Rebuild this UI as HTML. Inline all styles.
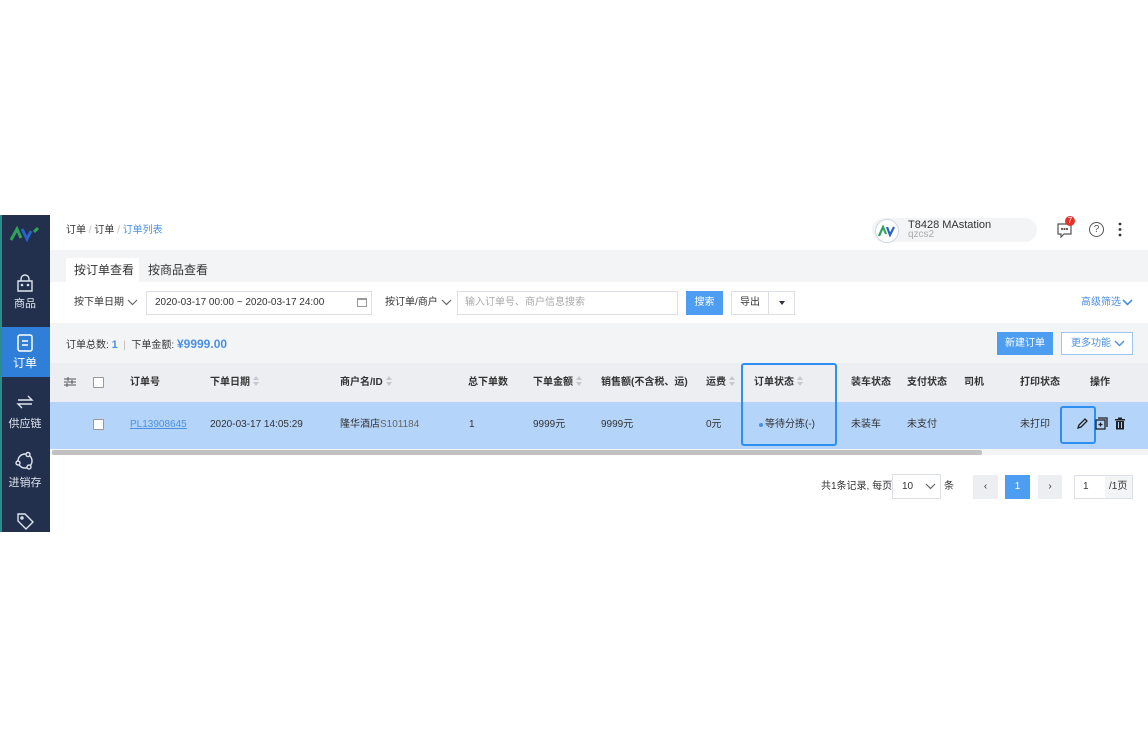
<!DOCTYPE html>
<html><head><meta charset="utf-8"><style>
*{margin:0;padding:0;box-sizing:border-box}
body{width:1148px;height:748px;background:#fff;position:relative;font-family:"Liberation Sans","Noto Sans CJK SC",sans-serif;font-size:10px;color:#333;overflow:hidden}
.a{position:absolute;white-space:nowrap;line-height:12px}
.side{left:0;top:215px;width:50px;height:317px;background:#22304d;border-left:2px solid #2a8d8a}
.ni{left:0;width:50px;text-align:center;color:#dfe4ee;font-size:11px;line-height:14px}
.b{font-weight:bold;color:#333}
.sort{display:inline-block;width:6px;height:0;margin-left:3px;position:relative;top:-9px}
.sort:before{content:"";position:absolute;left:0;top:0;border:3px solid transparent;border-bottom:4px solid #c8c8cc;border-top:0}
.sort:after{content:"";position:absolute;left:0;top:6px;border:3px solid transparent;border-top:4px solid #c8c8cc;border-bottom:0}
.cb{width:11px;height:11px;border:1px solid #999;background:#fff;border-radius:1px}
</style></head><body>
<div class="a side"></div>
<svg class="a" style="left:9px;top:226px" width="32" height="16" viewBox="0 0 32 16"><path d="M2 14 L8 3 L12 12" stroke="#2fa35a" stroke-width="3" fill="none"/><path d="M13 3 L18 13 L22 5" stroke="#2a62c8" stroke-width="3" fill="none"/><path d="M25 6 L29 2" stroke="#2fa35a" stroke-width="3"/></svg>
<svg class="a" style="left:15px;top:274px" width="20" height="20" viewBox="0 0 20 20" fill="none" stroke="#dfe4ee" stroke-width="1.4"><path d="M3 7h14v10H3z"/><path d="M6 7V5a4 4 0 0 1 8 0v2"/><circle cx="7" cy="11" r=".6"/><circle cx="13" cy="11" r=".6"/></svg>
<div class="a ni" style="top:297px">商品</div>
<div class="a" style="left:2px;top:327px;width:48px;height:50px;background:#2f7fd8"></div>
<div class="a" style="left:45px;top:347px;border:5px solid transparent;border-right:5px solid #f3f4f6"></div>
<svg class="a" style="left:15px;top:333px" width="20" height="20" viewBox="0 0 20 20" fill="none" stroke="#fff" stroke-width="1.5"><rect x="3" y="2" width="14" height="16" rx="2"/><path d="M7 8h6M7 12h6"/></svg>
<div class="a ni" style="top:356px;color:#fff;font-size:12px">订单</div>
<svg class="a" style="left:14px;top:392px" width="22" height="20" viewBox="0 0 22 20" fill="none" stroke="#dfe4ee" stroke-width="1.4"><path d="M4 8h14l-4-4M18 12H4l4 4"/></svg>
<div class="a ni" style="top:417px">供应链</div>
<svg class="a" style="left:15px;top:451px" width="20" height="20" viewBox="0 0 20 20" fill="none" stroke="#dfe4ee" stroke-width="1.4"><circle cx="10" cy="10" r="7"/><circle cx="13" cy="3.5" r="2" fill="#22304d"/><circle cx="3" cy="12" r="2" fill="#22304d"/><circle cx="14" cy="16" r="2" fill="#22304d"/></svg>
<div class="a ni" style="top:476px">进销存</div>
<svg class="a" style="left:15px;top:511px" width="20" height="20" viewBox="0 0 20 20" fill="none" stroke="#dfe4ee" stroke-width="1.4"><path d="M3 3h7l8 8-7 7-8-8z"/><circle cx="7" cy="7" r="1"/></svg>

<div class="a" style="left:50px;top:250px;width:1098px;height:282px;background:#f3f4f6"></div>
<div class="a" style="left:66px;top:225px">订单 <span style="color:#bbb">/</span> 订单 <span style="color:#bbb">/</span> <span style="color:#4a90e2">订单列表</span></div>
<div class="a" style="left:872px;top:218px;width:165px;height:24px;background:#f3f4f6;border-radius:12px"></div>
<div class="a" style="left:875px;top:219px;width:24px;height:24px;border-radius:50%;background:#fff;border:1px solid #cfd6e0"></div>
<svg class="a" style="left:878px;top:225px" width="18" height="12" viewBox="0 0 18 12"><path d="M1 11L5 2 8 9" stroke="#2fa35a" stroke-width="2.2" fill="none"/><path d="M9 2l3 8 4-8" stroke="#2a62c8" stroke-width="2.2" fill="none"/></svg>
<div class="a" style="left:908px;top:219px;font-size:11px">T8428 MAstation</div>
<div class="a" style="left:908px;top:229px;color:#aaa">qzcs2</div>
<svg class="a" style="left:1056px;top:221px" width="18" height="18" viewBox="0 0 18 18" fill="none" stroke="#555" stroke-width="1.2"><path d="M2 3h13v10H8l-3 3v-3H2z"/><circle cx="6" cy="8" r=".5"/><circle cx="8.5" cy="8" r=".5"/><circle cx="11" cy="8" r=".5"/></svg>
<div class="a" style="left:1065px;top:216px;width:10px;height:10px;border-radius:50%;background:#e5312a;color:#fff;font-size:8px;text-align:center;line-height:10px">7</div>
<div class="a" style="left:1089px;top:222px;width:15px;height:15px;border:1.3px solid #555;border-radius:50%;font-size:10px;text-align:center;line-height:13px;color:#555">?</div>
<svg class="a" style="left:1117px;top:222px" width="6" height="15"><circle cx="3" cy="2" r="1.4" fill="#333"/><circle cx="3" cy="7.5" r="1.4" fill="#333"/><circle cx="3" cy="13" r="1.4" fill="#333"/></svg>

<div class="a" style="left:66px;top:258px;width:73px;height:25px;background:#fff"></div>
<div class="a" style="left:74px;top:263px;font-size:12px;line-height:14px">按订单查看</div>
<div class="a" style="left:148px;top:263px;font-size:12px;line-height:14px">按商品查看</div>
<div class="a" style="left:50px;top:282px;width:1098px;height:41px;background:#fff"></div>
<div class="a" style="left:74px;top:297px">按下单日期</div>
<svg class="a" style="left:127px;top:299px" width="11" height="7"><path d="M1 1l4.5 4.5L10 1" stroke="#666" stroke-width="1.2" fill="none"/></svg>
<div class="a" style="left:146px;top:291px;width:226px;height:24px;border:1px solid #dcdfe6;background:#fff"></div>
<div class="a" style="left:155px;top:297px">2020-03-17 00:00 ~ 2020-03-17 24:00</div>
<div class="a" style="left:357px;top:298px;width:10px;height:9px;border:1px solid #999;border-top-width:2px"></div>
<div class="a" style="left:385px;top:297px">按订单/商户</div>
<svg class="a" style="left:441px;top:299px" width="11" height="7"><path d="M1 1l4.5 4.5L10 1" stroke="#666" stroke-width="1.2" fill="none"/></svg>
<div class="a" style="left:457px;top:291px;width:221px;height:24px;border:1px solid #dcdfe6;background:#fff"></div>
<div class="a" style="left:465px;top:297px;color:#aaa">输入订单号、商户信息搜索</div>
<div class="a" style="left:686px;top:291px;width:37px;height:24px;background:#4d9ef0;color:#fff;text-align:center;line-height:24px">搜索</div>
<div class="a" style="left:731px;top:291px;width:64px;height:24px;border:1px solid #dcdfe6;background:#fff"></div>
<div class="a" style="left:768px;top:291px;width:1px;height:24px;background:#dcdfe6"></div>
<div class="a" style="left:740px;top:297px">导出</div>
<div class="a" style="left:779px;top:301px;border:3px solid transparent;border-top:4px solid #333"></div>
<div class="a" style="left:1081px;top:297px;color:#4a90e2">高级筛选</div>
<svg class="a" style="left:1122px;top:299px" width="11" height="7"><path d="M1 1l4.5 4.5L10 1" stroke="#4a90e2" stroke-width="1.6" fill="none"/></svg>

<div class="a" style="left:66px;top:337px;line-height:14px">订单总数: <b style="color:#4a90e2;font-size:11px">1</b> &nbsp;<span style="color:#bbb">|</span>&nbsp; 下单金额: <b style="color:#4a90e2;font-size:12px">¥9999.00</b></div>
<div class="a" style="left:997px;top:332px;width:56px;height:23px;background:#4d9ef0;color:#fff;text-align:center;line-height:23px">新建订单</div>
<div class="a" style="left:1061px;top:332px;width:72px;height:23px;border:1px solid #9cc5f2;background:#fff;color:#4a90e2;line-height:21px;padding-left:9px">更多功能</div>
<svg class="a" style="left:1114px;top:340px" width="11" height="7"><path d="M1 1l4.5 4.5L10 1" stroke="#4a90e2" stroke-width="1.4" fill="none"/></svg>

<div class="a" style="left:50px;top:363px;width:1098px;height:39px;background:#eceef1"></div>
<div class="a" style="left:50px;top:402px;width:1098px;height:47px;background:#b4d4f9"></div>
<div class="a" style="left:52px;top:450px;width:930px;height:5px;background:#c1c1c1;border-radius:2px"></div>
<div class="a" style="left:50px;top:455px;width:1098px;height:77px;background:#fff"></div>
<svg class="a" style="left:64px;top:377px" width="12" height="10" stroke="#555" stroke-width="1"><path d="M0 2h12M0 5h12M0 8h12"/><path d="M4 0v4M8 3v4M3 6v4"/></svg>
<div class="a cb" style="left:93px;top:377px"></div>
<div class="a cb" style="left:93px;top:419px"></div>
<div class="a b" style="left:130px;top:377px">订单号</div>
<div class="a b" style="left:210px;top:377px">下单日期<span class="sort"></span></div>
<div class="a b" style="left:340px;top:377px">商户名/ID<span class="sort"></span></div>
<div class="a b" style="left:468px;top:377px">总下单数</div>
<div class="a b" style="left:533px;top:377px">下单金额<span class="sort"></span></div>
<div class="a b" style="left:601px;top:377px">销售额(不含税、运)</div>
<div class="a b" style="left:706px;top:377px">运费<span class="sort"></span></div>
<div class="a b" style="left:754px;top:377px">订单状态<span class="sort"></span></div>
<div class="a b" style="left:851px;top:377px">装车状态</div>
<div class="a b" style="left:907px;top:377px">支付状态</div>
<div class="a b" style="left:964px;top:377px">司机</div>
<div class="a b" style="left:1020px;top:377px">打印状态</div>
<div class="a b" style="left:1090px;top:377px">操作</div>

<div class="a" style="left:130px;top:419px;color:#4a90e2;text-decoration:underline">PL13908645</div>
<div class="a" style="left:210px;top:419px">2020-03-17 14:05:29</div>
<div class="a" style="left:340px;top:419px">隆华酒店<span style="color:#666">S101184</span></div>
<div class="a" style="left:469px;top:419px">1</div>
<div class="a" style="left:533px;top:419px">9999元</div>
<div class="a" style="left:601px;top:419px">9999元</div>
<div class="a" style="left:706px;top:419px">0元</div>
<div class="a" style="left:759px;top:423px;width:4px;height:4px;border-radius:50%;background:#4a90e2"></div>
<div class="a" style="left:765px;top:419px">等待分拣(-)</div>
<div class="a" style="left:851px;top:419px">未装车</div>
<div class="a" style="left:907px;top:419px">未支付</div>
<div class="a" style="left:1020px;top:419px">未打印</div>
<div class="a" style="left:741px;top:363px;width:96px;height:83px;border:2px solid #2d8ff0;border-radius:3px"></div>
<div class="a" style="left:1060px;top:406px;width:36px;height:38px;border:2px solid #2d8ff0;border-radius:3px"></div>
<svg class="a" style="left:1076px;top:417px" width="12" height="13" viewBox="0 0 12 13" fill="none" stroke="#222" stroke-width="1.3"><path d="M2 11l1-3 6-6 2 2-6 6z"/></svg>
<svg class="a" style="left:1095px;top:417px" width="13" height="13" viewBox="0 0 13 13" fill="none" stroke="#222" stroke-width="1.3"><rect x="1" y="3" width="9" height="9"/><path d="M3 1h9v9M5.5 5.5v4M3.5 7.5h4"/></svg>
<svg class="a" style="left:1114px;top:417px" width="12" height="13" viewBox="0 0 12 13" fill="#222"><rect x="1" y="2" width="10" height="1.5"/><rect x="4" y="0.5" width="4" height="1.5"/><path d="M2 4h8v8.5H2z"/><rect x="4" y="5" width="1" height="6" fill="#b4d4f9"/><rect x="7" y="5" width="1" height="6" fill="#b4d4f9"/></svg>

<div class="a" style="left:821px;top:481px">共1条记录, 每页</div>
<div class="a" style="left:892px;top:474px;width:49px;height:25px;border:1px solid #dcdfe6"></div>
<div class="a" style="left:902px;top:481px">10</div>
<svg class="a" style="left:925px;top:483px" width="11" height="7"><path d="M1 1l4.5 4.5L10 1" stroke="#666" stroke-width="1.2" fill="none"/></svg>
<div class="a" style="left:944px;top:481px">条</div>
<div class="a" style="left:973px;top:475px;width:25px;height:24px;background:#eceef1;text-align:center;line-height:24px">‹</div>
<div class="a" style="left:1005px;top:475px;width:25px;height:24px;background:#4d9ef0;color:#fff;text-align:center;line-height:24px">1</div>
<div class="a" style="left:1038px;top:475px;width:24px;height:24px;background:#eceef1;text-align:center;line-height:24px">›</div>
<div class="a" style="left:1074px;top:475px;width:59px;height:24px;border:1px solid #dcdfe6"></div>
<div class="a" style="left:1105px;top:476px;width:27px;height:22px;background:#f3f4f6"></div>
<div class="a" style="left:1083px;top:481px">1</div>
<div class="a" style="left:1109px;top:481px">/1页</div>
</body></html>
